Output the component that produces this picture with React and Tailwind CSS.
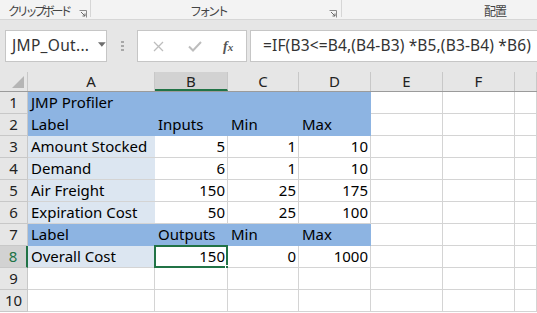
const cols = ["A", "B", "C", "D", "E", "F", ""];
const widths = ["w-[127px]", "w-[73px]", "w-[71px]", "w-[72px]", "w-[72px]", "w-[72px]", "w-[22px]"];

const BLUE = "bg-[#8db4e2]";
const LIGHT = "bg-[#dce6f1]";

// each row: array of [text, align, fill]
const rows = [
    [["JMP Profiler", "l", BLUE], ["", "l", BLUE], ["", "l", BLUE], ["", "l", BLUE]],
    [["Label", "l", BLUE], ["Inputs", "l", BLUE], ["Min", "l", BLUE], ["Max", "l", BLUE]],
    [["Amount Stocked", "l", LIGHT], ["5", "r"], ["1", "r"], ["10", "r"]],
    [["Demand", "l", LIGHT], ["6", "r"], ["1", "r"], ["10", "r"]],
    [["Air Freight", "l", LIGHT], ["150", "r"], ["25", "r"], ["175", "r"]],
    [["Expiration Cost", "l", LIGHT], ["50", "r"], ["25", "r"], ["100", "r"]],
    [["Label", "l", BLUE], ["Outputs", "l", BLUE], ["Min", "l", BLUE], ["Max", "l", BLUE]],
    [["Overall Cost", "l", LIGHT], ["150", "r"], ["0", "r"], ["1000", "r"]],
    [],
    [],
];

function Launcher() {
    return (
        <svg width="8" height="8" viewBox="0 0 8 8" className="mt-[10px]">
            <path d="M0.5 0.5h7v7" fill="none" stroke="#8a8a8a" />
            <path d="M2 2l4 4M3.5 6h2.5v-2.5" fill="none" stroke="#6a6a6a" />
        </svg>
    );
}

export default function App() {
    return (
        <div className="w-[537px] h-[313px] overflow-hidden bg-white text-black" style={{ fontFamily: '"Noto Sans", "Noto Sans CJK JP", sans-serif' }}>
            {/* ribbon group labels */}
            <div className="h-[20px] bg-[#f3f3f3] border-b border-[#d6d6d6] flex text-[12px] text-[#444] leading-[18px] whitespace-nowrap">
                <div className="w-[91px] shrink-0 flex items-start border-r border-[#d6d6d6] h-[17px]">
                    <span className="pl-[8px] pt-[3px] tracking-[-3.3px]">クリップボード</span>
                    <span className="ml-[10px]"><Launcher /></span>
                </div>
                <div className="w-[251px] shrink-0 flex items-start border-r border-[#d6d6d6] h-[17px]">
                    <span className="ml-[99px] pt-[3px] tracking-[-3px]">フォント</span>
                    <span className="ml-[103px]"><Launcher /></span>
                </div>
                <div className="flex-1 pl-[142px] pt-[3px] tracking-[-1px]">配置</div>
            </div>

            {/* formula bar */}
            <div className="h-[52px] bg-[#e6e6e6] flex items-start pt-[10px]">
                <div className="ml-[5px] w-[102px] h-[32px] bg-white border border-[#c6c6c6] flex items-center">
                    <span className="pl-[6px] text-[15.5px] text-[#333] tracking-[0.3px]">JMP_Out...</span>
                    <svg width="9" height="5" viewBox="0 0 9 5" className="ml-[9px] mb-[4px]">
                        <path d="M0 0h9L4.5 5z" fill="#6d6d6d" />
                    </svg>
                </div>
                <div className="w-[30px] h-[32px] flex flex-col items-center justify-center gap-[2px]">
                    <span className="w-[3px] h-[2px] bg-[#a8a8a8]" />
                    <span className="w-[3px] h-[2px] bg-[#a8a8a8]" />
                    <span className="w-[3px] h-[2px] bg-[#a8a8a8]" />
                </div>
                <div className="w-[110px] h-[32px] bg-white border border-[#c6c6c6] flex items-center">
                    <svg width="11" height="11" viewBox="0 0 11 11" className="ml-[15px]">
                        <path d="M1 1l9 9M10 1l-9 9" stroke="#bdbdbd" strokeWidth="1.3" />
                    </svg>
                    <svg width="14" height="11" viewBox="0 0 14 11" className="ml-[24px]">
                        <path d="M1 5.5l4 4L13 1" fill="none" stroke="#bdbdbd" strokeWidth="2" />
                    </svg>
                    <span className="ml-[21px] text-[14px] italic text-[#555] font-semibold" style={{ fontFamily: '"Liberation Serif", serif' }}>
                        f<span className="text-[11px]">x</span>
                    </span>
                </div>
                <div className="ml-[3px] flex-1 h-[32px] bg-white border border-[#c6c6c6] border-r-0 flex items-center">
                    <span className="pl-[12px] text-[15.5px] text-[#333] whitespace-nowrap tracking-[0.15px]">
                        =IF(B3&lt;=B4,(B4-B3) *B5,(B3-B4) *B6)
                    </span>
                </div>
            </div>

            {/* column headers */}
            <div className="h-[20px] flex bg-[#e6e6e6] border-b border-[#9b9b9b] text-[15px] leading-[19px] text-[#222]">
                <div className="w-[28px] h-full border-r border-[#c8c8c8] flex items-end justify-end pr-[3px] pb-[3px]">
                    <svg width="12" height="12" viewBox="0 0 12 12">
                        <path d="M12 0v12H0z" fill="#b5b5b5" />
                    </svg>
                </div>
                {cols.map((c, i) => (
                    <div
                        key={i}
                        className={`${widths[i]} shrink-0 h-full text-center border-r border-[#c8c8c8] ${
                            c === "B" ? "bg-[#d2d2d2] border-b-2 border-b-[#217346]" : ""
                        }`}
                    >
                        {c}
                    </div>
                ))}
            </div>

            {/* rows */}
            {rows.map((r, ri) => {
                const selected = ri === 7;
                return (
                    <div key={ri} className="h-[22px] flex text-[15px] leading-[21px]">
                        <div
                            className={`w-[28px] shrink-0 h-full text-center border-b border-[#c8c8c8] ${
                                selected
                                    ? "bg-[#d2d2d2] text-[#217346] border-r-2 border-r-[#217346]"
                                    : "bg-[#e6e6e6] text-[#222] border-r border-[#9b9b9b]"
                            }`}
                        >
                            {ri + 1}
                        </div>
                        {cols.map((c, ci) => {
                            const cell = r[ci] || ["", "l", ""];
                            const [text, align, fill] = cell;
                            const isSel = selected && ci === 1;
                            return (
                                <div
                                    key={ci}
                                    className={`${widths[ci]} shrink-0 h-full relative whitespace-nowrap ${
                                        fill ? fill : "bg-white border-r border-b border-[#d4d4d4]"
                                    } ${fill === LIGHT ? "border-b border-[#d4d4d4]" : ""} ${
                                        align === "r" ? "text-right pr-[2px]" : "text-left pl-[3px]"
                                    }`}
                                >
                                    {isSel && (
                                        <>
                                            <div className="absolute -left-[1px] -top-[1px] right-[-1px] bottom-[-1px] border-2 border-[#217346]" />
                                            <div className="absolute right-[-4px] bottom-[-4px] w-[6px] h-[6px] bg-[#217346] border border-white" />
                                        </>
                                    )}
                                    <span className="relative">{text}</span>
                                </div>
                            );
                        })}
                    </div>
                );
            })}
        </div>
    );
}
